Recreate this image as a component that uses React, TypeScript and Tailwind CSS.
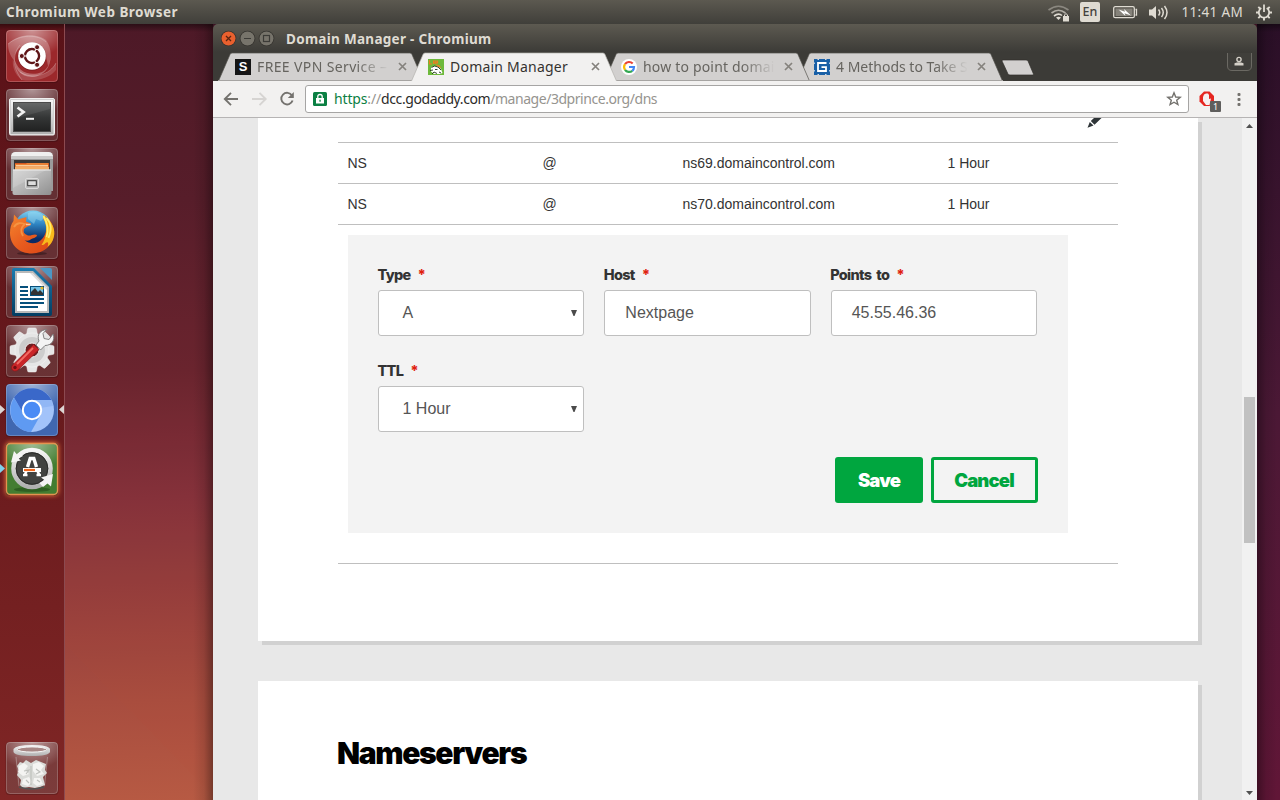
import type { ReactNode } from 'react';

const UI = "font-['Noto_Sans','Liberation_Sans',sans-serif]";
const HEAD = "font-['Inter','Liberation_Sans',sans-serif]";

/* ---------- launcher ---------- */

function Tile({ fill = 'rgba(255,255,255,0.13)', children }: { fill?: string; children: ReactNode }) {
  return (
    <svg width="52" height="52" viewBox="0 0 52 52" className="block shrink-0 overflow-visible">
      <rect x="-0.5" y="0" width="53" height="53" rx="4" fill="#000" opacity=".18" />
      <rect width="52" height="52" rx="4" fill={fill} />
      <rect width="52" height="52" rx="4" fill="url(#gloss)" />
      <rect x=".5" y=".5" width="51" height="51" rx="3.5" fill="none" stroke="#fff" strokeOpacity=".2" />
      {children}
    </svg>
  );
}

function Defs() {
  return (
    <svg width="0" height="0" className="absolute">
      <defs>
        <radialGradient id="gloss" cx=".5" cy="0" r=".7" gradientTransform="matrix(1 0 0 .75 0 0)">
          <stop offset="0" stopColor="#fff" stopOpacity=".5" />
          <stop offset="1" stopColor="#fff" stopOpacity="0" />
        </radialGradient>
        <linearGradient id="silver" x1="0" y1="0" x2="0" y2="1">
          <stop offset="0" stopColor="#f6f6f6" />
          <stop offset="1" stopColor="#b0b0b0" />
        </linearGradient>
        <linearGradient id="drawer" x1="0" y1="0" x2="1" y2="1">
          <stop offset="0" stopColor="#d2d2d2" />
          <stop offset=".5" stopColor="#b4b4b4" />
          <stop offset="1" stopColor="#8f8f8f" />
        </linearGradient>
        <linearGradient id="screen" x1="0" y1="0" x2="0" y2="1">
          <stop offset="0" stopColor="#5a5c5c" />
          <stop offset=".5" stopColor="#353737" />
          <stop offset="1" stopColor="#202121" />
        </linearGradient>
        <linearGradient id="globe" x1="0" y1="0" x2="0" y2="1">
          <stop offset="0" stopColor="#7fd0f0" />
          <stop offset=".35" stopColor="#2f86c4" />
          <stop offset=".75" stopColor="#0b2a63" />
        </linearGradient>
        <linearGradient id="fox" x1="0" y1="0" x2="1" y2="1">
          <stop offset="0" stopColor="#f4862e" />
          <stop offset=".5" stopColor="#e85c1f" />
          <stop offset="1" stopColor="#d84314" />
        </linearGradient>
        <linearGradient id="docblue" x1="0" y1="0" x2="0" y2="1">
          <stop offset="0" stopColor="#1a7bb0" />
          <stop offset="1" stopColor="#033d61" />
        </linearGradient>
      </defs>
    </svg>
  );
}

function Dash() {
  return (
    <Tile fill="#9c282b">
      <path d="M2 14C14 2 32 4 40 10C46 18 46 30 42 36C40 20 32 12 22 14C12 16 8 24 8 30C4 26 2 20 2 14Z" fill="#fff" opacity=".24" />
      <path d="M7 28C9 40 18 46 28 46C38 46 46 40 50 33V40C44 48 30 52 16 50C8 44 6 36 7 28Z" fill="#fff" opacity=".16" />
      <path d="M8 26C10 42 24 47 36 42C42 39 45 32 44 24C46 34 40 46 26 47C14 47 8 38 8 26Z" fill="#fff" opacity=".3" />
      <path d="M16 50C8 40 5 26 14 15M50 33C44 45 26 50 14 42M2 14C14 4 32 4 40 12" fill="none" stroke="#fff" strokeOpacity=".28" strokeWidth=".8" />
      <circle cx="26" cy="26.500" r="14.300" fill="#4a0d0f" opacity=".3" />
      <circle cx="26" cy="26" r="13.800" fill="#fff" />
      <circle cx="26" cy="26" r="7" fill="none" stroke="#5e1517" strokeWidth="2.600" />
      <path d="M26 26H15M26 26L31.500 16.500M26 26L31.500 35.500" stroke="#fff" strokeWidth="1.200" />
      <circle cx="26" cy="26" r="5.600" fill="#fff" />
      {[[15.8, 26], [31.1, 17.2], [31.1, 34.8]].map(([x, y]) => (
        <circle key={y} cx={x} cy={y} r="2.500" fill="#5e1517" stroke="#fff" strokeWidth=".9" />
      ))}
    </Tile>
  );
}

function Terminal() {
  return (
    <Tile>
      <rect x="3.500" y="9.500" width="45" height="36.500" rx="1.500" fill="#cfcfcf" stroke="#f0f0f0" />
      <rect x="5" y="11" width="42" height="34" fill="url(#silver)" />
      <rect x="7.500" y="13.500" width="37" height="29" fill="url(#screen)" stroke="#4a4a4a" />
      <path d="M8 14H44V20L8 30Z" fill="#fff" opacity=".08" />
      <path d="M11.500 18.500L17.500 23L11.500 27.500" fill="none" stroke="#f2f2f2" strokeWidth="2.800" />
      <path d="M20 29.800H28" stroke="#f2f2f2" strokeWidth="2" />
    </Tile>
  );
}

function Files() {
  return (
    <Tile>
      <path d="M6 5.500Q7 4 9 4H43Q45 4 46 5.500L47 8V43H5V8Z" fill="#9b9b9b" />
      <path d="M6 5.500Q7 4 9 4H43Q45 4 46 5.500L47 8H5Z" fill="#efefef" />
      <path d="M5 8H47V11H5Z" fill="#c9c9c9" />
      <rect x="8" y="12" width="36" height="10" fill="#3a3735" />
      <path d="M9 15H43V22H9Z" fill="#d4581f" />
      <path d="M9 16H20L21 15H42V22H9Z" fill="#e98034" />
      <path d="M10 17.800H42" stroke="#fbe0b6" strokeWidth="1.200" />
      <path d="M9 19H43V22H9Z" fill="#f3ad66" />
      <path d="M7 21.500H45L45.500 45Q45.500 47 43.500 47H8.500Q6.500 47 6.500 45Z" fill="url(#drawer)" />
      <path d="M7 22H45" stroke="#ececec" />
      <path d="M7 22H40L7 40Z" fill="#fff" opacity=".14" />
      <rect x="19.500" y="30.500" width="13" height="10" rx="1.500" fill="#b9b9b9" stroke="#dcdcdc" />
      <rect x="21.700" y="32.700" width="8.600" height="5" fill="#ddd" stroke="#333" />
    </Tile>
  );
}

function Firefox() {
  return (
    <Tile>
      <ellipse cx="26" cy="46.500" rx="15" ry="1.800" fill="#000" opacity=".3" />
      <circle cx="27" cy="22.500" r="19" fill="url(#globe)" />
      <path d="M22 6C28 3 36 6 39 10L35 14L30 12L28 17L22 12Z" fill="#a6e0f6" opacity=".4" />
      <path d="M39 9C46 14 48.500 21 48 27C47 38 38 46.500 26 46.500C13 46.500 4 38 4 26C4 21 5 17 7.500 14L8 7.500L12.500 12.500C15 11 17 11.500 20.500 10L20 14.500L25 16.500C25.500 19 21 19 18 22C17 25 18 27 21 28C24 30 28 26 31 28C31 31 26 31 24 33C22 34 20 34 18.500 33C24 38 32 37 36 32C41 27 42 18 37 11Z" fill="url(#fox)" />
      <path d="M37 8C44 12 49 20 48.300 27C47.500 34 45 37 41.500 40C43 36 42 34 39.500 36C38 38 37 38 35.500 38C41 31 42 18 37 11Z" fill="#f8b91c" />
      <path d="M40.500 11C46 17 45.500 23 42.500 31M37.500 9C42 17 43 23 40.500 30" fill="none" stroke="#ffee70" strokeWidth="1.800" />
      <path d="M8 20C11 15 15 16 19 17C15 20 14 24 17 29" fill="none" stroke="#f8a34e" strokeWidth="1.800" opacity=".7" />
      <path d="M20 17.500L24.500 17.500" stroke="#f7c8a2" strokeWidth="1.500" />
    </Tile>
  );
}

function Writer() {
  return (
    <Tile>
      <path d="M8 2H28L46 20V48Q46 50 44 50H8Q6 50 6 48V4Q6 2 8 2Z" fill="url(#docblue)" />
      <path d="M34 2H44Q46 2 46 4V14Z" fill="#4d96c3" />
      <path d="M9 5H27L43 21V47H9Z" fill="#b9b9b9" />
      <path d="M11 7H26.500L41 21.500V45H11Z" fill="#fff" />
      <path d="M26.500 7L41 21.500V24L24 7Z" fill="#ddd" />
      <path d="M14 21H22M14 25H22M14 29H22M14 33H38M14 37H38M14 41H32" stroke="#06507c" strokeWidth="2" />
      <rect x="24.500" y="20.500" width="13" height="9" fill="#75c4e6" stroke="#06507c" />
      <path d="M25 29V26L29 22L32 26L34 24L37 27V29Z" fill="#333" />
      <circle cx="36" cy="22" r="1.600" fill="#e3b92e" />
    </Tile>
  );
}

function Settings() {
  return (
    <Tile>
      <g fill="#e5e5e5" stroke="#f7f7f7" strokeWidth=".5">
        {[0, 45, 90, 135].map((a) => (
          <path key={a} d="M21.500 4.500Q21.500 3 23 3H29Q30.500 3 30.500 4.500L31.500 10H20.500ZM20.500 40H31.500L30.500 45.500Q30.500 47 29 47H23Q21.500 47 21.500 45.500Z" transform={`rotate(${a} 26 25)`} />
        ))}
        <circle cx="26" cy="25" r="17" />
      </g>
      <circle cx="26" cy="25" r="13" fill="#cdcdcd" />
      <circle cx="26" cy="25" r="7" fill="#6d2023" stroke="#eee" />
      <path d="M30 20L33 16C30.500 10 34 5 40.500 4.500L37 8.500L38 13.500L43 14.500L47 9C49.500 15 45.500 20.500 39 20.500L34.500 25Z" fill="#f4f4f4" stroke="#777" strokeWidth=".9" />
      <path d="M27.500 19.500L33 24.500L12 45C8 48 3.500 44 6.500 40Z" fill="#c92427" stroke="#8e1619" strokeWidth=".7" />
      <path d="M27 23L11 39" stroke="#f16b64" strokeWidth="1.800" />
      <circle cx="9" cy="42.500" r="1.700" fill="#711113" />
    </Tile>
  );
}

function Chromium() {
  return (
    <Tile fill="#4067b0">
      <circle cx="26" cy="26" r="22" fill="#a2c3fa" />
      <path d="M8 14A22 22 0 0 0 25 48L34.500 31L18 30Z" fill="#5f9af2" />
      <path d="M8 13.500A22 22 0 0 1 45.500 16H26C19 16 16 20 16.500 28Z" fill="#3a68c9" />
      <path d="M26 16H45.500L47 22L34 24Z" fill="#7da8ef" opacity=".45" />
      <circle cx="26" cy="26" r="9.200" fill="#4a8bf5" stroke="#fff" strokeWidth="2" />
    </Tile>
  );
}

function Updater() {
  return (
    <div className="h-[52px] w-[52px] rounded-[4px] shadow-[0_0_4px_1px_#d96a3a]">
      <Tile fill="#437d31">
        <rect x=".5" y=".5" width="51" height="51" rx="4" fill="none" stroke="#e5924f" strokeWidth="1.300" />
        <ellipse cx="26" cy="46.500" rx="18" ry="2.500" fill="#234d19" opacity=".6" />
        <circle cx="26" cy="25.500" r="18.500" fill="#414240" stroke="url(#silver)" strokeWidth="4.600" />
        <circle cx="26" cy="25.500" r="15.800" fill="none" stroke="#2b2c2a" />
        <path d="M5 19.500L8 8L11 11.500L14 9L17 13L12.500 15.500L15 17.500Z" fill="#f4f4f4" />
        <path d="M47 31L45 43.500L41.500 40.500L37 44L33.500 40L38.500 37L35 34.500Z" fill="#f4f4f4" />
        <path d="M21.500 24L24.200 15.500H27.800L30.500 24" fill="none" stroke="#fff" strokeWidth="3.400" />
        <path d="M20.500 28L18.500 32.500M31.500 28L33.500 32.500M17 32H21.500M30.500 32H35" fill="none" stroke="#fff" strokeWidth="2.600" />
        <path d="M17 27H35" stroke="#fff" strokeWidth="4" />
        <path d="M18 27H29" stroke="#f0651b" strokeWidth="2.200" />
      </Tile>
    </div>
  );
}

function Trash() {
  return (
    <Tile>
      <path d="M9 11H42L39 45Q38 48 26 48Q13 48 12 45Z" fill="#fff" opacity=".04" />
      <path d="M10 15L13 44M38.500 44L41.500 15" fill="none" stroke="#ddd" strokeOpacity=".35" />
      <path d="M11 24L14 20L17 21L20 18L25 21L30 18L35 20L40 22L39 28L41 31L37 35L39 43L34 45L29 46L23 45L17 46L14 43L15 38L11 33L13 29Z" fill="#dadbd8" />
      <path d="M13 24L18 21L22 24L19 28L23 32L17 34L12 30ZM27 22L33 20L38 24L35 28L38 32L31 34L27 29ZM17 37L23 35L26 40L22 44L16 42ZM28 36L34 36L37 42L31 44L27 41Z" fill="#f4f4f2" />
      <path d="M18 29L23 28L20 32M30 27L34 30L30 32M25 24V43M20 38L23 41M31 38L34 40" fill="none" stroke="#bdbfbb" strokeWidth="1.100" />
      <path d="M13 45Q26 49 38 45" fill="none" stroke="#525252" strokeWidth="1.500" />
      <path d="M7.500 7V10Q9 14 26 14Q42 14 44 10V7Q42 3 26 3Q10 3 7.500 7Z" fill="url(#silver)" />
      <ellipse cx="26" cy="7.500" rx="14.500" ry="2.600" fill="#a78785" stroke="#f5f5f5" />
    </Tile>
  );
}

function Launcher() {
  return (
    <nav className="relative flex w-[65px] shrink-0 flex-col justify-between border-r border-[#8c4a50] bg-linear-to-b from-[#5a1218] via-[#681a1d] to-[#802625] pt-[6px] pb-[6px] pl-[6px]">
      <div className="flex flex-col gap-[7px]">
        <Dash /><Terminal /><Files /><Firefox /><Writer /><Settings /><Chromium /><Updater />
      </div>
      <Trash />
      <svg width="65" height="776" className="absolute top-0 left-0">
        <path d="M0 381L5 385.500L0 390ZM64 381L59 385.500L64 390Z" fill="#dcd5d3" />
        <path d="M0 440L5 444.500L0 449Z" fill="#7fd0ec" />
      </svg>
      <div className="absolute inset-x-0 top-0 h-[6px] bg-linear-to-b from-black/40 to-transparent" />
    </nav>
  );
}

/* ---------- top panel ---------- */

function TopPanel() {
  return (
    <header className={`flex h-6 shrink-0 items-center justify-between bg-linear-to-b from-[#5c5950] to-[#403f3a] pl-[6px] text-[#dfdbd2] ${UI}`}>
      <span className="text-[13.500px] leading-6 font-bold tracking-[0.480px]">Chromium Web Browser</span>
      <div className="flex h-6 items-center">
        <svg width="22" height="24" viewBox="1048 0 22 24">
          <path d="M1048.500 10Q1058.500 2.500 1068.500 10" fill="none" stroke="#8b8880" strokeWidth="1.600" />
          <path d="M1051.500 13Q1058.500 7.500 1065.500 13" fill="none" stroke="#b0aca4" strokeWidth="1.600" />
          <path d="M1054 16Q1058.500 12.500 1062 15.500" fill="none" stroke="#dfdbd2" strokeWidth="1.600" />
          <path d="M1058.500 20L1056 17.500Q1058.500 16 1061 17.500Z" fill="#dfdbd2" />
          <rect x="1063" y="16" width="6" height="5.500" fill="#dfdbd2" />
          <path d="M1064.500 16V14.800Q1066 12.500 1067.500 14.800V16" fill="none" stroke="#dfdbd2" />
        </svg>
        <span className="ml-[10px] flex h-5 w-5 items-center justify-center rounded-[2px] bg-[#dfdbd2] pt-px text-[12.500px] font-medium text-[#44423d]">En</span>
        <svg width="25" height="24" viewBox="1113 0 25 24" className="ml-[12.500px]">
          <rect x="1113.700" y="6.700" width="20.600" height="11" rx="1.500" fill="none" stroke="#dfdbd2" strokeWidth="1.300" />
          <rect x="1115.500" y="8.500" width="17" height="7.500" fill="#85827a" />
          <path d="M1135.500 9.500H1136.500V15H1135.500" fill="none" stroke="#dfdbd2" strokeWidth="1.300" />
          <path d="M1118.500 9.500L1125 11.800L1124 9L1131 15.500L1124.500 13.200L1125.500 16Z" fill="#fff" />
        </svg>
        <svg width="22" height="24" viewBox="1148 0 22 24" className="ml-[10px]">
          <path d="M1149 9.500H1152L1156 6V19L1152 15.500H1149Z" fill="#dfdbd2" />
          <path d="M1158.500 9.500Q1161 12.500 1158.500 15.500M1161.500 8Q1165 12.500 1161.500 17M1164.500 6Q1169.500 12.500 1164.500 19" fill="none" stroke="#dfdbd2" strokeWidth="1.500" />
        </svg>
        <span className="ml-[12px] w-[62px] text-[13.500px] leading-6 whitespace-nowrap tracking-[0.320px]">11:41 AM</span>
        <svg width="18" height="24" viewBox="1255 0 18 24" className="mr-[7px] ml-[11.500px]">
          <g stroke="#dfdbd2" fill="none">
            <path d="M1261.300 8A5.200 5.200 0 1 0 1266.700 8" strokeWidth="1.800" />
            <path d="M1264 4.500V12" strokeWidth="1.800" />
            <path d="M1256 12.500H1259M1269 12.500H1272M1258.300 6.800L1260.300 8.800M1269.700 6.800L1267.700 8.800M1258.300 18.200L1260.300 16.200M1269.700 18.200L1267.700 16.200M1264 17.500V20.500" strokeWidth="1.900" />
          </g>
        </svg>
      </div>
    </header>
  );
}

/* ---------- browser chrome ---------- */

function TitleBar() {
  return (
    <div className="flex h-7 shrink-0 items-center pl-[8px]">
      <svg width="55" height="28" viewBox="0 0 55 28">
        <circle cx="7.500" cy="14.500" r="7.800" fill="#34322e" />
        <circle cx="7.500" cy="14.500" r="7" fill="#e9602e" />
        <path d="M5 12L10 17M10 12L5 17" stroke="#5a2410" strokeWidth="1.300" />
        <circle cx="26.500" cy="14.500" r="7.800" fill="#34322e" />
        <circle cx="26.500" cy="14.500" r="7" fill="#77746b" />
        <path d="M23 14.500H30" stroke="#3c3b37" strokeWidth="1.200" />
        <circle cx="45.500" cy="14.500" r="7.800" fill="#34322e" />
        <circle cx="45.500" cy="14.500" r="7" fill="#77746b" />
        <rect x="42.500" y="11.500" width="6" height="6" fill="none" stroke="#3c3b37" strokeWidth="1.200" />
      </svg>
      <span className="ml-[10px] pt-px text-[13.500px] leading-6 font-bold tracking-[0.290px] text-[#dfdbd2]">Domain Manager - Chromium</span>
    </div>
  );
}

function Tab({ icon, title, active = false, fade = false, z, track }: { icon: ReactNode; title: string; active?: boolean; fade?: boolean; z: string; track: string }) {
  return (
    <div className={`relative -mr-[13px] flex h-[29px] w-[206px] items-center pl-[17px] ${z}`}>
      <svg width="206" height="29" className="absolute top-0 left-0">
        <path d="M.5 29L12 2.500Q12.500 1 14 1H192Q193.500 1 194 2.500L205.500 29Z" fill={active ? '#f2f1f0' : '#d2d0cf'} />
        <path d="M.5 29L12 2.500Q12.500 1 14 1H192Q193.500 1 194 2.500L205.500 29" fill="none" stroke={active ? '#b3b1ae' : '#55534e'} strokeWidth=".7" />
        {!active && <path d="M0 28.500H206" stroke="#a6a4a2" />}
      </svg>
      <span className="relative h-4 w-4">{icon}</span>
      <span className={`relative ml-[6px] w-[132px] overflow-hidden text-[14px] leading-5 whitespace-nowrap ${track} ${active ? 'text-[#35332f]' : 'text-[#66645f]'} ${fade ? 'mask-[linear-gradient(to_right,#000_75%,transparent_100%)]' : ''}`}>{title}</span>
      <svg width="9" height="9" className="relative ml-[8.500px]">
        <path d="M1 1L8 8M8 1L1 8" stroke="#85827d" strokeWidth="1.700" />
      </svg>
    </div>
  );
}

function VpnIcon() {
  return <span className="flex h-4 w-4 items-center justify-center bg-[#151515] font-['Liberation_Sans',sans-serif] text-[13px] leading-4 font-bold text-white">S</span>;
}

function DaddyIcon() {
  return (
    <svg width="16" height="16" className="block">
      <rect width="16" height="16" fill="#6eb93b" />
      <path d="M3 8.500Q6 6 10 7.500L13 10L14.500 14L12 15H6L3 12.500Z" fill="#fff" />
      <path d="M1.500 1V5H4M5.500 5V2H8V5M5.500 3.800H8M9.500 1.500V4.500" stroke="#ef7d20" strokeWidth="1.200" fill="none" />
      <path d="M3.500 8.500L6.500 7L10 8L13 11M2 11.500L5 11M4 15L6 13L9 14.500M7 10.500H9.500M11 13L13 14" stroke="#20331a" strokeWidth=".9" fill="none" />
      <path d="M7 5.500L11 6L13.500 9L10 7.500Z" fill="#ef7d20" />
    </svg>
  );
}

function GoogleIcon() {
  return (
    <svg width="16" height="16" className="block">
      <circle cx="8" cy="8" r="8" fill="#fff" />
      <g fill="none" strokeWidth="2.200">
        <path d="M4 5.200A5 5 0 0 1 11.700 4.500" stroke="#ea4335" />
        <path d="M4 10.800A5 5 0 0 1 4 5.200" stroke="#fbbc05" />
        <path d="M4 10.800A5 5 0 0 0 11.300 11.800" stroke="#34a853" />
        <path d="M8 8H13A5 5 0 0 1 11.300 11.800" stroke="#4285f4" />
      </g>
    </svg>
  );
}

function MethodsIcon() {
  return (
    <svg width="16" height="16" className="block">
      <rect width="16" height="16" fill="#185fa6" />
      <path d="M12.500 4H4V12H12V8.200H7.500" fill="none" stroke="#fff" strokeWidth="1.800" />
      <path d="M3.500 0H5M11 0H12.500M3.500 16H5M11 16H12.500M0 3.500V5M0 11V12.500M16 3.500V5M16 11V12.500" stroke="#fff" strokeWidth="1.300" />
    </svg>
  );
}

function TabStrip() {
  return (
    <div className="flex h-[29px] shrink-0 items-start pl-[5px]">
      <Tab z="z-30" fade title="FREE VPN Service –" icon={<VpnIcon />} track="tracking-[0.370px]" />
      <Tab z="z-40" active title="Domain Manager" icon={<DaddyIcon />} track="tracking-[0.220px]" />
      <Tab z="z-20" fade title="how to point domai" icon={<GoogleIcon />} track="tracking-[0.180px]" />
      <Tab z="z-10" fade title="4 Methods to Take S" icon={<MethodsIcon />} track="tracking-[0px]" />
      <svg width="36" height="29" className="ml-[10px]">
        <path d="M3 8H26Q27.500 8 28 9L33.500 22Q33.500 23 32.500 23H10Q8.500 23 8 22L2 9Q2 8 3 8Z" fill="#d2d0cf" stroke="#302f2b" strokeWidth=".7" />
      </svg>
      <svg width="26" height="20" className="mr-[4px] ml-auto">
        <path d="M.5 1V14Q.5 18.500 5 18.500H20Q24.500 18.500 24.500 14V1" fill="#403f3b" stroke="#6b6963" />
        <circle cx="12" cy="7.500" r="2.100" fill="none" stroke="#d4d0c8" strokeWidth="1.400" />
        <path d="M7.500 13.500V11.300Q12 9 16.500 11.300V13.500Z" fill="#d4d0c8" />
      </svg>
    </div>
  );
}

function Toolbar() {
  return (
    <div className="flex h-[37px] shrink-0 items-center border-b border-[#b6b4b4] bg-[#f2f1f0]">
      <svg width="92" height="36">
        <path d="M25 18H12.500M18 11.800L11.800 18L18 24.200" fill="none" stroke="#74726e" strokeWidth="1.900" />
        <path d="M39 18H52M46.500 11.800L52.700 18L46.500 24.200" fill="none" stroke="#d6d4d2" strokeWidth="1.900" />
        <path d="M79 14.500A5.800 5.800 0 1 0 79.600 19.500" fill="none" stroke="#74726e" strokeWidth="1.900" />
        <path d="M80.800 11V17H74.800Z" fill="#74726e" />
      </svg>
      <div className="flex h-7 w-[884px] items-center rounded-[3px] border border-[#a6a5a4] bg-white pl-[7px]">
        <svg width="14" height="14">
          <rect width="14" height="14" rx="1.500" fill="#0b8043" />
          <rect x="3" y="6" width="8" height="5.500" fill="#fff" />
          <path d="M4.800 6V4.500Q4.800 2.500 7 2.500Q9.200 2.500 9.200 4.500V6" fill="none" stroke="#fff" strokeWidth="1.300" />
          <rect x="6.400" y="7.700" width="1.300" height="2" fill="#0b8043" />
        </svg>
        <span className="ml-[7px] text-[14px] leading-6 tracking-[-0.460px] whitespace-nowrap text-[#96948f]">
          <span className="tracking-[-0.150px]"><span className="text-[#0b8043]">https</span>://</span><span className="tracking-[-0.400px] text-[#2c2b29]">dcc.godaddy.com</span>/manage/3dprince.org/dns
        </span>
        <svg width="16" height="16" viewBox="0 0 16 16" className="mr-[6px] ml-auto">
          <path d="M8 1.800L9.700 6L14.200 6.300L10.700 9.200L11.900 13.600L8 11.200L4.100 13.600L5.300 9.200L1.800 6.300L6.300 6Z" fill="none" stroke="#74726e" strokeWidth="1.400" />
        </svg>
      </div>
      <div className="relative ml-[10px] h-[22px] w-[24px]">
        <svg width="16" height="16" className="absolute top-[3px] left-0">
          <path d="M5 .5H10.500L15 5V10.500L10.500 15H5L.5 10.500V5Z" fill="#e52620" />
          <path d="M4 6L5 3.500L7 2.500L9 2.500L10 4V8L12 7.500L10.500 14H7L4 10Z" fill="#f6f0f0" />
        </svg>
        <span className="absolute top-[13px] left-[11px] flex h-[11px] w-[11px] items-center justify-center rounded-[1px] bg-[#5f5e5d] text-[9px] leading-none text-white">1</span>
      </div>
      <svg width="6" height="18" className="ml-[13px]">
        <rect x="1.500" y="3" width="3" height="3" rx="1" fill="#74726e" />
        <rect x="1.500" y="8" width="3" height="3" rx="1" fill="#74726e" />
        <rect x="1.500" y="13" width="3" height="3" rx="1" fill="#74726e" />
      </svg>
    </div>
  );
}

/* ---------- page ---------- */

function RecordRow({ value }: { value: string }) {
  return (
    <div className="flex h-[41px] items-center border-b border-[#bfbfbf] pl-[9.500px] text-[14px] text-[#333]">
      <span className="w-[195px]">NS</span>
      <span className="w-[140px]">@</span>
      <span className="w-[265px]">{value}</span>
      <span>1 Hour</span>
    </div>
  );
}

function Field({ label, value, select = false }: { label: string; value: string; select?: boolean }) {
  return (
    <div className="h-24">
      <div className={`-ml-[0.500px] flex h-[25px] items-center pb-[5px] text-[14.500px] leading-4 font-extrabold tracking-[-0.700px] [word-spacing:2.5px] text-[#333] ${HEAD}`}>
        {label}<span className="ml-[7px] text-[#e01f0f]">*</span>
      </div>
      <div className={`flex h-[46px] items-center justify-between rounded-[3px] border border-[#bfbfbf] bg-white pr-[5px] text-[16px] text-[#555] ${select ? 'pl-[23.500px]' : 'pl-[20px]'}`}>
        {value}
        {select && <svg width="8" height="8"><path d="M1 1H7L4.500 7H3.500Z" fill="#4b4b4b" /></svg>}
      </div>
    </div>
  );
}

function Page() {
  return (
    <main className="min-w-0 flex-1 overflow-hidden bg-[#e8e8e8] pl-[45px] font-['Liberation_Sans',sans-serif]">
      <section className="h-[523px] w-[940px] bg-white px-[80px] shadow-[4px_4px_0_#d1d1d1]">
        <div className="flex h-[25px] justify-end border-b border-[#bfbfbf] pr-[15px]">
          <svg width="16" height="10">
            <path d="M.5 9.800L2.800 4L6.500 7.500ZM3.800 3L7 0H14.500L7.500 6.700Z" fill="#2f3538" />
          </svg>
        </div>
        <RecordRow value="ns69.domaincontrol.com" />
        <RecordRow value="ns70.domaincontrol.com" />
        <div className="border-b border-[#bfbfbf] px-[10px] pt-[10px] pb-[30px]">
          <div className="h-[298px] w-[720px] bg-[#f3f3f3] px-[30px] pt-[30px]">
            <div className="grid w-[659px] grid-cols-3 gap-x-5">
              <Field label="Type" value="A" select />
              <Field label="Host" value="Nextpage" />
              <Field label="Points to" value="45.55.46.36" />
              <Field label="TTL" value="1 Hour" select />
            </div>
            <div className={`flex justify-end gap-2 text-[18.500px] font-black tracking-[-0.850px] ${HEAD}`}>
              <button className="h-[46px] w-[88px] rounded-[3px] bg-[#00a63f] pt-[2px] text-white">Save</button>
              <button className="h-[46px] w-[107px] rounded-[3px] border-3 border-[#00a63f] pt-[2px] pr-px text-[#00a63f]">Cancel</button>
            </div>
          </div>
        </div>
      </section>
      <section className="mt-10 h-[200px] w-[940px] bg-white px-[79px] pt-[52px] shadow-[4px_4px_0_#d1d1d1]">
        <h2 className={`text-[30px] leading-10 font-black tracking-[-1.350px] text-black ${HEAD}`}>Nameservers</h2>
      </section>
    </main>
  );
}

function Scrollbar() {
  return (
    <div className="flex w-[15px] shrink-0 flex-col items-center justify-between bg-[#f1f1f1]">
      <svg width="15" height="15"><path d="M4 10L7.500 6L11 10Z" fill="#505050" /></svg>
      <div className="mt-[21px] h-[146px] w-[11px] bg-[#c1c1c1]" />
      <svg width="15" height="15"><path d="M4 6L7.500 10L11 6Z" fill="#505050" /></svg>
    </div>
  );
}

function Browser() {
  return (
    <div className={`relative flex w-[1044px] shrink-0 flex-col overflow-hidden rounded-t-[5px] bg-[linear-gradient(to_bottom,#5d5a51,#3c3b37_28px)] ${UI}`}>
      <TitleBar />
      <TabStrip />
      <Toolbar />
      <div className="flex min-h-0 flex-1">
        <Page />
        <Scrollbar />
      </div>
    </div>
  );
}

export default function App() {
  return (
    <div className="flex h-[800px] w-[1280px] flex-col overflow-hidden">
      <Defs />
      <TopPanel />
      <div className="flex min-h-0 flex-1 bg-[#3c1424]">
        <Launcher />
        <div className="relative w-[148px] shrink-0 bg-[linear-gradient(178deg,#471726_0%,#521b2a_23%,#66222e_45%,#82303a_61%,#a84d3f_87%,#b75a43_100%)]">
          <svg width="148" height="776" className="absolute top-0 left-0">
            <path d="M0 620L148 772V0H0Z" fill="#c44e38" opacity=".05" />
          </svg>
          <div className="absolute inset-y-0 right-0 w-5 bg-[linear-gradient(to_right,transparent,rgba(0,0,0,.1)_55%,rgba(0,0,0,.35))]" />
          <div className="absolute inset-x-0 top-0 h-[8px] bg-linear-to-b from-black/45 to-transparent" />
        </div>
        <Browser />
        <div className="relative flex-1 bg-linear-to-b from-[#2a0f27] via-[#4b1835] to-[#611637]">
          <div className="absolute inset-y-0 left-0 w-5 bg-[linear-gradient(to_left,transparent,rgba(0,0,0,.1)_55%,rgba(0,0,0,.35))]" />
          <div className="absolute inset-x-0 top-0 h-[8px] bg-linear-to-b from-black/45 to-transparent" />
        </div>
      </div>
    </div>
  );
}
